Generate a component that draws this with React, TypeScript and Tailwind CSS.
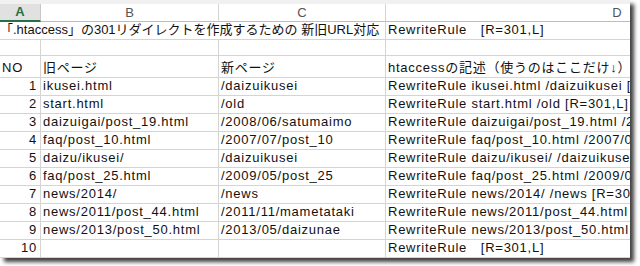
const rows: [string, string][] = [
  ['ikusei.html', '/daizuikusei'],
  ['start.html', '/old'],
  ['daizuigai/post_19.html', '/2008/06/satumaimo'],
  ['faq/post_10.html', '/2007/07/post_10'],
  ['daizu/ikusei/', '/daizuikusei'],
  ['faq/post_25.html', '/2009/05/post_25'],
  ['news/2014/', '/news'],
  ['news/2011/post_44.html', '/2011/11/mametataki'],
  ['news/2013/post_50.html', '/2013/05/daizunae'],
];

const font = { fontFamily: '"Liberation Sans", "Noto Sans CJK JP", sans-serif' };

function Cell({ w, children, right }: { w: string; children?: React.ReactNode; right?: boolean }) {
  return (
    <div
      className={`${w} shrink-0 h-full border-r border-[#d4d4d4] flex items-end overflow-hidden whitespace-nowrap pb-[1px] ${
        right ? 'justify-end pr-[3px]' : 'pl-[2px]'
      }`}
    >
      {children}
    </div>
  );
}

function Row({ h, a, b, c, d, right }: { h: string; a?: string; b?: string; c?: string; d?: string; right?: boolean }) {
  return (
    <div className={`flex ${h} border-b border-[#d4d4d4]`}>
      <Cell w="w-[41px]" right={right}>{a}</Cell>
      <Cell w="w-[178px]">{b}</Cell>
      <Cell w="w-[167px]">{c}</Cell>
      <Cell w="w-[463px]">{d}</Cell>
    </div>
  );
}

export default function App() {
  return (
    <div className="w-[640px] h-[266px] bg-white overflow-hidden">
      <div
        className="w-[630px] h-[258px] bg-white overflow-hidden text-[13px] leading-[16px] tracking-[0.75px] text-[#111] shadow-[4px_4px_4px_rgba(0,0,0,0.75)]"
        style={font}
      >
        <div className="h-[4px] bg-[#f1f1f1]" />
        {/* column headers */}
        <div className="flex h-[18px] text-[#555] tracking-normal">
          <div className="w-[41px] shrink-0 bg-[#e1e1e1] border-r border-[#c8c8c8] border-b-2 border-b-[#217346] flex items-center justify-center font-bold text-[#217346]">
            A
          </div>
          <div className="w-[178px] shrink-0 border-r border-b border-[#d4d4d4] border-b-[#bdbdbd] flex items-center justify-center">B</div>
          <div className="w-[167px] shrink-0 border-r border-b border-[#d4d4d4] border-b-[#bdbdbd] flex items-center justify-center">C</div>
          <div className="w-[463px] shrink-0 border-r border-b border-[#d4d4d4] border-b-[#bdbdbd] flex items-center justify-center">D</div>
        </div>
        {/* title row */}
        <div className="flex h-[18px] border-b border-[#d4d4d4]">
          <div className="w-[386px] shrink-0 h-full border-r border-[#d4d4d4] flex items-end whitespace-nowrap overflow-hidden pb-[1px] tracking-normal">
            「.htaccess」の301リダイレクトを作成するための 新旧URL対応
          </div>
          <Cell w="w-[463px]">RewriteRule　[R=301,L]</Cell>
        </div>
        <Row h="h-[16px]" />
        <Row h="h-[22px]" a="NO" b="旧ページ" c="新ページ" d="htaccessの記述（使うのはここだけ↓）" />
        {rows.map(([o, n], i) => (
          <Row key={i} h="h-[18px]" right a={String(i + 1)} b={o} c={n} d={`RewriteRule ${o} ${n} [R=301,L]`} />
        ))}
        <Row h="h-[18px]" right a="10" d="RewriteRule　[R=301,L]" />
      </div>
    </div>
  );
}
